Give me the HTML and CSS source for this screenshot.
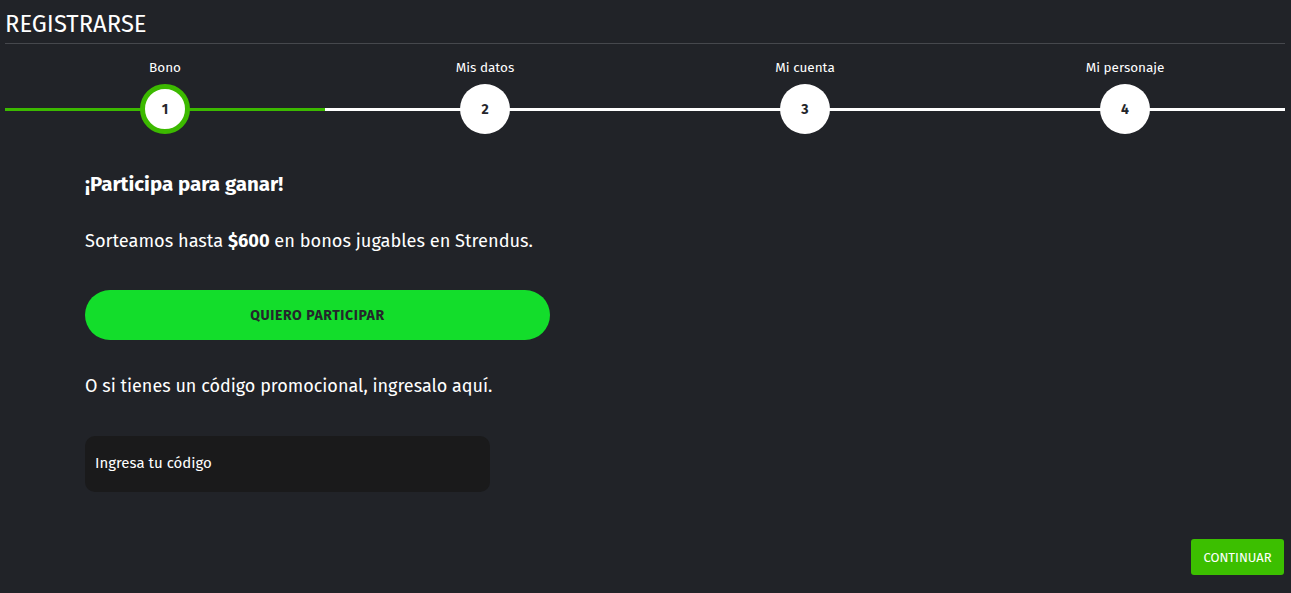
FILE: index.html
```html
<!DOCTYPE html>
<html lang="es">
<head>
<meta charset="utf-8">
<title>Registrarse</title>
<link rel="stylesheet" href="styles.css">
</head>
<body>
<div class="page">
  <header class="header">
    <h1 class="title">REGISTRARSE</h1>
  </header>
  <div class="stepper">
    <div class="step done">
      <div class="step-label">Bono</div>
      <div class="step-track"><span class="step-dot">1</span></div>
    </div>
    <div class="step">
      <div class="step-label">Mis datos</div>
      <div class="step-track"><span class="step-dot">2</span></div>
    </div>
    <div class="step">
      <div class="step-label">Mi cuenta</div>
      <div class="step-track"><span class="step-dot">3</span></div>
    </div>
    <div class="step">
      <div class="step-label">Mi personaje</div>
      <div class="step-track"><span class="step-dot">4</span></div>
    </div>
  </div>
  <main class="content">
    <h2 class="lead">¡Participa para ganar!</h2>
    <p class="text">Sorteamos hasta <b>$600</b> en bonos jugables en Strendus.</p>
    <button class="btn-participar">QUIERO PARTICIPAR</button>
    <p class="text text-code">O si tienes un código promocional, ingresalo aquí.</p>
    <input class="code-input" type="text" placeholder="Ingresa tu código">
  </main>
  <footer class="footer">
    <button class="btn-continuar">CONTINUAR</button>
  </footer>
</div>
</body>
</html>
```

FILE: styles.css
```css
* { box-sizing: border-box; }
html, body { margin: 0; padding: 0; }
body {
  background: #212328;
  color: #ffffff;
  font-family: "Fira Sans", "Lato", "Noto Sans", sans-serif;
  height: 593px;
  overflow: hidden;
}
.page {
  padding: 0 6px 0 5px;
  display: flex;
  flex-direction: column;
  height: 593px;
}
.header {
  border-bottom: 1px solid #46484d;
  padding-top: 10px;
  height: 44px;
}
.title {
  margin: 0;
  font-size: 23.8px;
  font-weight: 400;
  line-height: 28px;
}
.stepper {
  display: grid;
  grid-template-columns: repeat(4, 1fr);
  padding-top: 16px;
}
.step {
  display: flex;
  flex-direction: column;
  align-items: center;
}
.step-label {
  font-size: 13.5px;
  line-height: 16px;
  height: 24px;
}
.step-track {
  width: 100%;
  height: 50px;
  display: flex;
  justify-content: center;
  align-items: center;
  background: linear-gradient(#fff, #fff) center / 100% 3px no-repeat;
}
.step.done .step-track {
  background: linear-gradient(#3cb900, #3cb900) center / 100% 3px no-repeat;
}
.step-dot {
  width: 50px;
  height: 50px;
  border-radius: 50%;
  background: #fff;
  color: #24262b;
  font-weight: 700;
  font-size: 14px;
  display: flex;
  align-items: center;
  justify-content: center;
}
.step.done .step-dot {
  border: 5px solid #3cb900;
}
.content {
  padding: 38px 0 0 80px;
  display: flex;
  flex-direction: column;
  align-items: flex-start;
}
.lead {
  margin: 0;
  font-size: 20.5px;
  font-weight: 700;
  line-height: 24px;
}
.text {
  margin: 33px 0 0;
  font-size: 18.2px;
  line-height: 24px;
}
.text b { font-weight: 700; }
.btn-participar {
  margin-top: 37px;
  width: 465px;
  height: 50px;
  border: 0;
  border-radius: 25px;
  background: #13dd2b;
  color: #24262b;
  font-family: inherit;
  font-weight: 700;
  font-size: 14px;
  letter-spacing: 0.6px;
}
.text-code {
  margin-top: 34px;
  font-size: 18px;
}
.code-input {
  margin-top: 38px;
  width: 405px;
  height: 56px;
  background: #1a1a1b;
  border: 0;
  border-radius: 10px;
  padding: 0 10px 2px;
  font-family: inherit;
  font-size: 15px;
  color: #fff;
  outline: none;
}
.code-input::placeholder { color: #fff; opacity: 1; }
.footer {
  margin-top: auto;
  display: flex;
  justify-content: flex-end;
  padding: 0 1px 18px 0;
}
.btn-continuar {
  width: 93px;
  height: 36px;
  background: #3cbf00;
  border: 0;
  border-radius: 3px;
  color: #fff;
  font-family: inherit;
  font-size: 13px;
  font-weight: 400;
}
```
